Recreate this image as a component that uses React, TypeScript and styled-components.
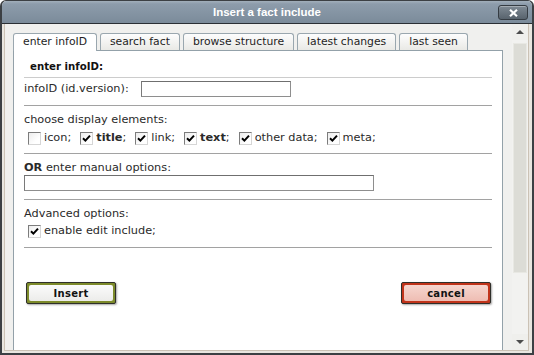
import React from 'react';
import styled, { createGlobalStyle } from 'styled-components';

const GlobalStyle = createGlobalStyle`
  html, body {
    margin: 0;
    padding: 0;
    background: #ffffff;
  }
  body {
    font-family: "DejaVu Sans", Verdana, sans-serif;
  }
`;

const Window = styled.div`
  width: 534px;
  height: 355px;
  box-sizing: border-box;
  display: flex;
  flex-direction: column;
  background: #e9e6e0;
  border: 2px solid #3c4044;
  border-top-width: 1px;
  border-radius: 6px 6px 0 0;
  overflow: hidden;
`;

const TitleBar = styled.div`
  height: 22px;
  flex: none;
  display: grid;
  grid-template-columns: 1fr auto 1fr;
  align-items: start;
  background: linear-gradient(#a2afbb 0px, #8d9cab 3px, #7b8b9a 100%);
  border-bottom: 1px solid #2a2f34;
`;

const Title = styled.div`
  grid-column: 2;
  line-height: 22px;
  font-family: "Liberation Sans", Arial, sans-serif;
  font-weight: bold;
  font-size: 11.5px;
  color: #ffffff;
`;

const CloseButton = styled.div`
  grid-column: 3;
  justify-self: end;
  width: 30px;
  height: 15px;
  box-sizing: border-box;
  margin: 4px 4px 0 0;
  border: 1px solid #353c43;
  border-radius: 3px;
  background: linear-gradient(#7f8a94, #58636d);
  box-shadow: inset 0 1px 0 rgba(255, 255, 255, 0.3);
  display: flex;
  align-items: center;
  justify-content: center;
`;

const Body = styled.div`
  flex: 1;
  display: flex;
  padding: 0 3px 2px 2px;
  min-height: 0;
`;

const Frame = styled.div`
  flex: 1;
  display: flex;
  background: #f0f0ee;
  border: 1px solid #cbc2b5;
  border-top: none;
  min-width: 0;
  overflow: hidden;
`;

const Main = styled.div`
  flex: 1;
  min-width: 0;
  display: flex;
  flex-direction: column;
  padding: 9px 9px 0 8px;
  overflow: hidden;
`;

const Tabs = styled.div`
  display: flex;
  align-items: flex-start;
  gap: 3px;
  height: 18px;
  margin-bottom: -1px;
  position: relative;
  z-index: 1;
`;

const Tab = styled.div<{ $active?: boolean }>`
  height: ${p => (p.$active ? '18px' : '17px')};
  box-sizing: border-box;
  padding: 0 9px;
  border: 1px solid #9aa7af;
  border-bottom: none;
  border-radius: 3px 3px 0 0;
  background: ${p => (p.$active ? '#ffffff' : 'linear-gradient(#fdfdfd, #e9e9e5)')};
  font-size: 10.8px;
  line-height: 16px;
  color: #1e1e1e;
  white-space: nowrap;
`;

const Panel = styled.div`
  flex: 1;
  background: #ffffff;
  border: 1px solid #93a1a9;
  border-bottom: none;
  padding: 0 10px;
`;

const Section = styled.div<{ $pt: number; $pb: number; $light?: boolean }>`
  padding-top: ${p => p.$pt}px;
  padding-bottom: ${p => p.$pb}px;
  border-bottom: 1px solid ${p => (p.$light ? '#cccccc' : '#a2a2a2')};
`;

const Heading = styled.div`
  padding-left: 6px;
  font-weight: bold;
  font-size: 10.2px;
  line-height: 14px;
  color: #111111;
`;

const Label = styled.div`
  font-size: 11.3px;
  line-height: 14px;
  color: #2a2a2a;
  white-space: nowrap;
`;

const InlineRow = styled.div`
  display: flex;
  align-items: center;
  gap: 12px;
`;

const TextInput = styled.input<{ $w: number }>`
  display: block;
  width: ${p => p.$w}px;
  height: 16px;
  box-sizing: border-box;
  margin: 0;
  padding: 0 2px;
  border: 1px solid #8e8e8e;
  border-top-color: #6f6f6f;
  border-left-color: #7a7a7a;
  background: #ffffff;
  font-size: 11px;
  font-family: inherit;
  outline: none;
`;

const CheckRow = styled.div<{ $mt: number }>`
  display: flex;
  align-items: center;
  height: 14px;
  margin-top: ${p => p.$mt}px;
  padding-left: 4px;
`;

const CheckItem = styled.label`
  display: flex;
  align-items: center;
  gap: 3px;
  margin-right: 9px;
  font-size: 11.3px;
  line-height: 14px;
  color: #2a2a2a;
  white-space: nowrap;
`;

const Box = styled.span`
  width: 13px;
  height: 13px;
  box-sizing: border-box;
  border: 1px solid;
  border-color: #7c7c7c #d6d6d6 #d6d6d6 #7c7c7c;
  background: linear-gradient(135deg, #ececec, #ffffff 70%);
  display: flex;
  align-items: center;
  justify-content: center;
`;

const ButtonRow = styled.div`
  display: flex;
  justify-content: space-between;
  margin-top: 34px;
  padding: 0 1px 0 2px;
`;

const Button = styled.div<{ $tone: 'ok' | 'cancel' }>`
  width: 90px;
  height: 22px;
  box-sizing: border-box;
  padding: 2px;
  border: 1px solid #2f2f2a;
  border-radius: 2px;
  background: ${p => (p.$tone === 'ok' ? '#7d8b2b' : '#c1341b')};
  box-shadow: 1px 1px 2px rgba(0, 0, 0, 0.35);
  display: flex;
`;

const ButtonFace = styled.span<{ $tone: 'ok' | 'cancel' }>`
  flex: 1;
  border-radius: 2px;
  background: ${p =>
    p.$tone === 'ok'
      ? 'linear-gradient(#fbfbfb, #ececea)'
      : 'linear-gradient(#f6d6cf, #eebdb3)'};
  display: flex;
  align-items: center;
  justify-content: center;
  font-weight: bold;
  font-size: 10px;
  letter-spacing: 0.3px;
  color: #121212;
`;

const Scrollbar = styled.div`
  width: 16px;
  flex: none;
  display: flex;
  flex-direction: column;
  background: #f2f2f0;
`;

const ArrowButton = styled.div`
  height: 16px;
  flex: none;
  display: flex;
  align-items: center;
  justify-content: center;
  background: #efefec;
`;

const Arrow = styled.span<{ $down?: boolean }>`
  width: 0;
  height: 0;
  border-left: 4px solid transparent;
  border-right: 4px solid transparent;
  ${p =>
    p.$down ? 'border-top: 4px solid #4c4c4c;' : 'border-bottom: 4px solid #4c4c4c;'}
`;

const Thumb = styled.div`
  height: 230px;
  margin: 3px 1px 0 1px;
  box-sizing: border-box;
  background: #dcdcd6;
  border: 1px solid #e8e8e3;
`;

const Spacer = styled.div`
  flex: 1;
`;

const Check = () => (
  <svg width="9" height="9" viewBox="0 0 9 9">
    <path d="M1 4.2 L3.4 6.6 L8 1.6" stroke="#000" strokeWidth="2" fill="none" />
  </svg>
);

const CheckBox = ({ checked }: { checked?: boolean }) => <Box>{checked && <Check />}</Box>;

const tabs = ['enter infoID', 'search fact', 'browse structure', 'latest changes', 'last seen'];

const displayOptions = [
  { label: 'icon', bold: false, checked: false },
  { label: 'title', bold: true, checked: true },
  { label: 'link', bold: false, checked: true },
  { label: 'text', bold: true, checked: true },
  { label: 'other data', bold: false, checked: true },
  { label: 'meta', bold: false, checked: true },
];

export default function App() {
  return (
    <>
      <GlobalStyle />
      <Window>
        <TitleBar>
          <Title>Insert a fact include</Title>
          <CloseButton>
            <svg width="9" height="8" viewBox="0 0 9 8">
              <path d="M1 0.8 L8 7.2 M8 0.8 L1 7.2" stroke="#fff" strokeWidth="2.2" />
            </svg>
          </CloseButton>
        </TitleBar>
        <Body>
          <Frame>
            <Main>
              <Tabs>
                {tabs.map((t, i) => (
                  <Tab key={t} $active={i === 0}>
                    {t}
                  </Tab>
                ))}
              </Tabs>
              <Panel>
                <Section $pt={9} $pb={3} $light>
                  <Heading>enter infoID:</Heading>
                </Section>
                <Section $pt={3} $pb={8}>
                  <InlineRow>
                    <Label>infoID (id.version):</Label>
                    <TextInput $w={150} />
                  </InlineRow>
                </Section>
                <Section $pt={7} $pb={8}>
                  <Label>choose display elements:</Label>
                  <CheckRow $mt={4}>
                    {displayOptions.map(o => (
                      <CheckItem key={o.label}>
                        <CheckBox checked={o.checked} />
                        <span>
                          {o.bold ? <b>{o.label}</b> : o.label};
                        </span>
                      </CheckItem>
                    ))}
                  </CheckRow>
                </Section>
                <Section $pt={7} $pb={8}>
                  <Label>
                    <b>OR</b> enter manual options:
                  </Label>
                  <TextInput $w={350} />
                </Section>
                <Section $pt={7} $pb={9}>
                  <Label>Advanced options:</Label>
                  <CheckRow $mt={3}>
                    <CheckItem>
                      <CheckBox checked />
                      <span>enable edit include;</span>
                    </CheckItem>
                  </CheckRow>
                </Section>
                <ButtonRow>
                  <Button $tone="ok">
                    <ButtonFace $tone="ok">Insert</ButtonFace>
                  </Button>
                  <Button $tone="cancel">
                    <ButtonFace $tone="cancel">cancel</ButtonFace>
                  </Button>
                </ButtonRow>
              </Panel>
            </Main>
            <Scrollbar>
              <ArrowButton>
                <Arrow />
              </ArrowButton>
              <Thumb />
              <Spacer />
              <ArrowButton>
                <Arrow $down />
              </ArrowButton>
            </Scrollbar>
          </Frame>
        </Body>
      </Window>
    </>
  );
}
